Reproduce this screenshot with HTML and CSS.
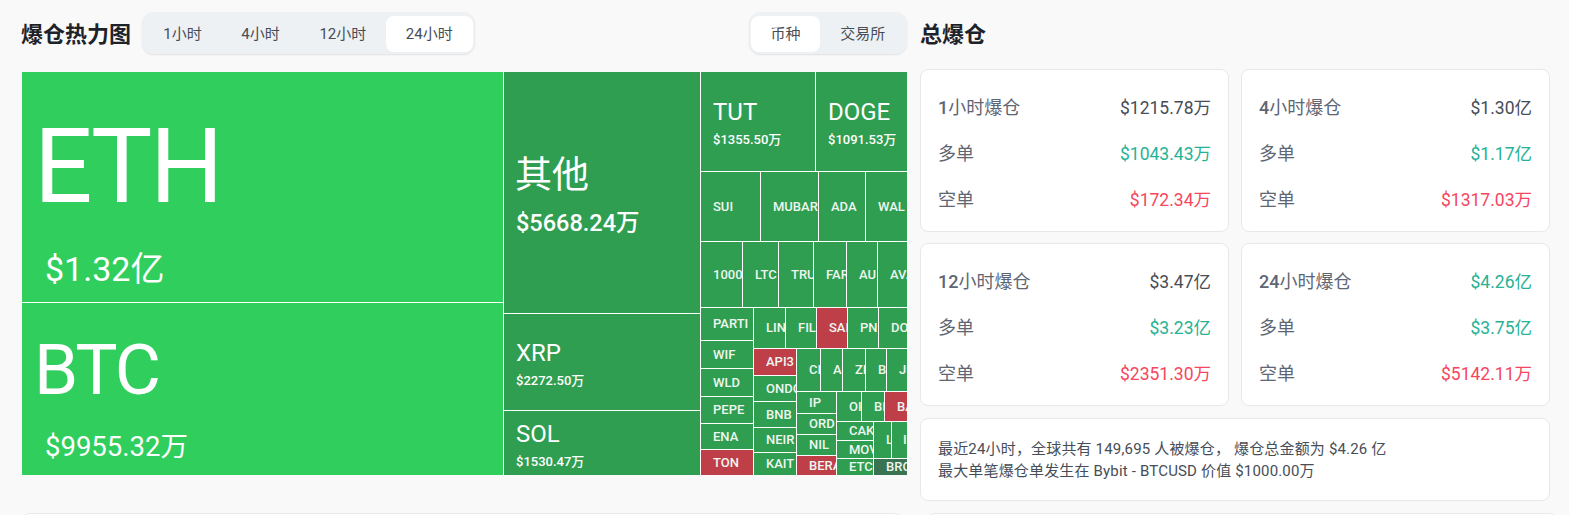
FILE: index.html
```html
<!DOCTYPE html>
<html lang="zh-CN">
<head>
<meta charset="utf-8">
<title>爆仓热力图</title>
<link rel="stylesheet" href="styles.css">
</head>
<body>
<main class="page">
  <section class="left">
    <header class="head">
      <div class="head-start">
        <h2 class="title">爆仓热力图</h2>
        <div class="seg">
          <button class="seg-btn">1小时</button>
          <button class="seg-btn">4小时</button>
          <button class="seg-btn">12小时</button>
          <button class="seg-btn on">24小时</button>
        </div>
      </div>
      <div class="seg">
        <button class="seg-btn on">币种</button>
        <button class="seg-btn">交易所</button>
      </div>
    </header>
    <div class="map">
      <div class="node hot xl eth" style="left:0;top:0;width:481px;height:230px"><b>ETH</b><span>$1.32亿</span></div>
      <div class="node hot xl btc" style="left:0;top:231px;width:481px;height:172px"><b>BTC</b><span>$9955.32万</span></div>
      <div class="node lg other" style="left:482px;top:0;width:196px;height:241px"><b>其他</b><span>$5668.24万</span></div>
      <div class="node md" style="left:482px;top:242px;width:196px;height:96px"><b>XRP</b><span>$2272.50万</span></div>
      <div class="node md" style="left:482px;top:339px;width:196px;height:64px"><b>SOL</b><span>$1530.47万</span></div>
      <div class="node md" style="left:679px;top:0;width:114px;height:99px"><b>TUT</b><span>$1355.50万</span></div>
      <div class="node md" style="left:794px;top:0;width:91px;height:99px"><b>DOGE</b><span>$1091.53万</span></div>
      <div class="node sm" style="left:679px;top:100px;width:59px;height:69px"><b>SUI</b></div>
      <div class="node sm" style="left:739px;top:100px;width:57px;height:69px"><b>MUBAR</b></div>
      <div class="node sm" style="left:797px;top:100px;width:46px;height:69px"><b>ADA</b></div>
      <div class="node sm" style="left:844px;top:100px;width:41px;height:69px"><b>WAL</b></div>
      <div class="node sm" style="left:679px;top:170px;width:41px;height:65px"><b>1000</b></div>
      <div class="node sm" style="left:721px;top:170px;width:35px;height:65px"><b>LTC</b></div>
      <div class="node sm" style="left:757px;top:170px;width:34px;height:65px"><b>TRU</b></div>
      <div class="node sm" style="left:792px;top:170px;width:32px;height:65px"><b>FAR</b></div>
      <div class="node sm" style="left:825px;top:170px;width:30px;height:65px"><b>AU</b></div>
      <div class="node sm" style="left:856px;top:170px;width:29px;height:65px"><b>AVA</b></div>
      <div class="node sm" style="left:679px;top:236px;width:52px;height:32px"><b>PARTI</b></div>
      <div class="node sm" style="left:679px;top:269px;width:52px;height:27px"><b>WIF</b></div>
      <div class="node sm" style="left:679px;top:297px;width:52px;height:27px"><b>WLD</b></div>
      <div class="node sm" style="left:679px;top:325px;width:52px;height:26px"><b>PEPE</b></div>
      <div class="node sm" style="left:679px;top:352px;width:52px;height:25px"><b>ENA</b></div>
      <div class="node sm red" style="left:679px;top:378px;width:52px;height:25px"><b>TON</b></div>
      <div class="node sm" style="left:732px;top:236px;width:31px;height:40px"><b>LIN</b></div>
      <div class="node sm" style="left:764px;top:236px;width:30px;height:40px"><b>FIL</b></div>
      <div class="node sm red" style="left:795px;top:236px;width:30px;height:40px"><b>SAI</b></div>
      <div class="node sm" style="left:826px;top:236px;width:30px;height:40px"><b>PN</b></div>
      <div class="node sm" style="left:857px;top:236px;width:28px;height:40px"><b>DO</b></div>
      <div class="node sm red" style="left:732px;top:277px;width:42px;height:26px"><b>API3</b></div>
      <div class="node sm" style="left:732px;top:304px;width:42px;height:25px"><b>ONDO</b></div>
      <div class="node sm" style="left:732px;top:330px;width:42px;height:25px"><b>BNB</b></div>
      <div class="node sm" style="left:732px;top:356px;width:42px;height:24px"><b>NEIR</b></div>
      <div class="node sm" style="left:732px;top:381px;width:42px;height:22px"><b>KAIT</b></div>
      <div class="node sm" style="left:775px;top:277px;width:23px;height:42px"><b>CI</b></div>
      <div class="node sm" style="left:799px;top:277px;width:21px;height:42px"><b>A</b></div>
      <div class="node sm" style="left:821px;top:277px;width:22px;height:42px"><b>ZI</b></div>
      <div class="node sm" style="left:844px;top:277px;width:20px;height:42px"><b>B</b></div>
      <div class="node sm" style="left:865px;top:277px;width:20px;height:42px"><b>JI</b></div>
      <div class="node sm" style="left:775px;top:320px;width:39px;height:21px"><b>IP</b></div>
      <div class="node sm" style="left:775px;top:342px;width:39px;height:20px"><b>ORD</b></div>
      <div class="node sm" style="left:775px;top:363px;width:39px;height:20px"><b>NIL</b></div>
      <div class="node sm red" style="left:775px;top:384px;width:39px;height:19px"><b>BERA</b></div>
      <div class="node sm" style="left:815px;top:320px;width:24px;height:29px"><b>OI</b></div>
      <div class="node sm" style="left:840px;top:320px;width:22px;height:29px"><b>BI</b></div>
      <div class="node sm red" style="left:863px;top:320px;width:22px;height:29px"><b>BA</b></div>
      <div class="node sm" style="left:815px;top:350px;width:36px;height:18px"><b>CAK</b></div>
      <div class="node sm" style="left:815px;top:369px;width:36px;height:17px"><b>MOV</b></div>
      <div class="node sm" style="left:815px;top:387px;width:36px;height:16px"><b>ETC</b></div>
      <div class="node sm" style="left:852px;top:350px;width:17px;height:36px"><b>L</b></div>
      <div class="node sm tiny" style="left:870px;top:350px;width:15px;height:36px"><b>I</b></div>
      <div class="node sm dim" style="left:852px;top:387px;width:33px;height:16px"><b>BRO</b></div>
    </div>
    <div class="card stub"></div>
  </section>
  <aside class="right">
    <h2 class="title side-title">总爆仓</h2>
    <div class="grid">
      <article class="card stat">
        <p class="row"><span class="lab"><i>1</i>小时爆仓</span><span class="val">$1215.78万</span></p>
        <p class="row"><span class="lab">多单</span><span class="up">$1043.43万</span></p>
        <p class="row"><span class="lab">空单</span><span class="down">$172.34万</span></p>
      </article>
      <article class="card stat">
        <p class="row"><span class="lab"><i>4</i>小时爆仓</span><span class="val">$1.30亿</span></p>
        <p class="row"><span class="lab">多单</span><span class="up">$1.17亿</span></p>
        <p class="row"><span class="lab">空单</span><span class="down">$1317.03万</span></p>
      </article>
      <article class="card stat">
        <p class="row"><span class="lab"><i>12</i>小时爆仓</span><span class="val">$3.47亿</span></p>
        <p class="row"><span class="lab">多单</span><span class="up">$3.23亿</span></p>
        <p class="row"><span class="lab">空单</span><span class="down">$2351.30万</span></p>
      </article>
      <article class="card stat">
        <p class="row"><span class="lab"><i>24</i>小时爆仓</span><span class="up">$4.26亿</span></p>
        <p class="row"><span class="lab">多单</span><span class="up">$3.75亿</span></p>
        <p class="row"><span class="lab">空单</span><span class="down">$5142.11万</span></p>
      </article>
    </div>
    <div class="card info">
      <p>最近24小时，全球共有 149,695 人被爆仓， 爆仓总金额为 $4.26 亿</p>
      <p>最大单笔爆仓单发生在 Bybit - BTCUSD 价值 $1000.00万</p>
    </div>
    <div class="card stub stub-right"></div>
  </aside>
</main>
</body>
</html>
```
FILE: styles.css
```css
* { box-sizing: border-box; }
html, body { margin: 0; height: 515px; overflow: hidden; background: #f9f9f9; }
body { font-family: Roboto, "Noto Sans CJK SC", sans-serif; color: #474d57; }
p, h2 { margin: 0; }

.page { display: flex; gap: 13px; padding-left: 21px; align-items: flex-start; height: 515px; overflow: hidden; }
.left { width: 886px; flex: none; }
.right { width: 630px; flex: none; }

.head { display: flex; justify-content: space-between; align-items: center; height: 42px; margin-top: 12px; }
.head-start { display: flex; align-items: center; gap: 10.5px; }
.title { font-size: 22px; font-weight: 700; color: #1e2329; line-height: 42px; padding-top: 4px; white-space: nowrap; }

.seg { display: flex; height: 42px; padding: 4px 2px 2px; background: #eef1f4; border-radius: 12px; box-shadow: 0 1px 2px rgba(0,0,0,.1); }
.seg-btn { font: inherit; font-size: 15px; color: #474d57; border: 0; background: none; padding: 0 19.8px 3px; border-radius: 8px; white-space: nowrap; }
.seg-btn.on { background: #fff; }

.map { position: relative; margin: 18px 0 0 1px; width: 885px; height: 403px; background: #fff; overflow: hidden; }
.node { position: absolute; display: flex; flex-direction: column; justify-content: center; overflow: hidden; background: #2f9e50; color: #fff; padding-left: 12px; white-space: nowrap; }
.node b { font-weight: 500; }
.node span { font-weight: 500; }
.hot { background: #30ce5c; }
.red { background: #bf3f49; }
.dim { background: #3a7351; }

.sm b { font-size: 13px; font-weight: 500; line-height: 16px; color: #eef6f0; }
.tiny { padding-left: 11px; }
.md { padding-top: 4px; }
.md b { font-size: 24px; font-weight: 400; line-height: 28px; }
.md span { font-size: 13px; line-height: 18px; margin-top: 5px; }
.lg { padding-left: 12px; padding-top: 4px; }
.lg b { font-size: 37px; font-weight: 400; line-height: 48px; margin-left: -1px; }
.lg span { font-size: 23.5px; font-weight: 500; line-height: 30px; margin-top: 8px; }
.xl b { font-weight: 400; }
.xl span { font-weight: 400; }
.eth { padding-left: 23px; padding-top: 24px; }
.eth b { font-size: 103px; line-height: 120px; margin-left: -11px; letter-spacing: -2.5px; }
.eth span { font-size: 34px; line-height: 44px; margin-top: 20px; }
.btc { padding-left: 23px; padding-top: 13px; }
.btc b { font-size: 71px; line-height: 88px; margin-left: -11px; letter-spacing: -2px; }
.btc span { font-size: 27.5px; line-height: 36px; margin-top: 15px; }

.side-title { height: 46px; margin-top: 12px; padding-top: 2px; }
.grid { display: grid; grid-template-columns: 309px 309px; column-gap: 12px; row-gap: 11px; margin-top: 11px; }
.card { background: #fff; border: 1px solid #e6e8ea; border-radius: 8px; }
.stat { height: 163px; padding: 13px 17px; display: flex; flex-direction: column; }
.row { display: flex; flex: none; justify-content: space-between; align-items: center; height: 46px; font-size: 17.5px; color: #5e6673; }
.lab { font-size: 18px; }
.row i { font-style: normal; font-weight: 500; }
.val { color: #474d57; }
.up { color: #27b296; }
.down { color: #f6465d; }
.info { margin-top: 12px; height: 83px; padding: 19px 17px; font-size: 15px; line-height: 22px; letter-spacing: .17px; color: #474d57; white-space: nowrap; }
.stub { width: 881px; height: 80px; margin: 38px 0 0 1px; }
.stub-right { width: 630px; margin: 12px 0 0 7px; }
```
